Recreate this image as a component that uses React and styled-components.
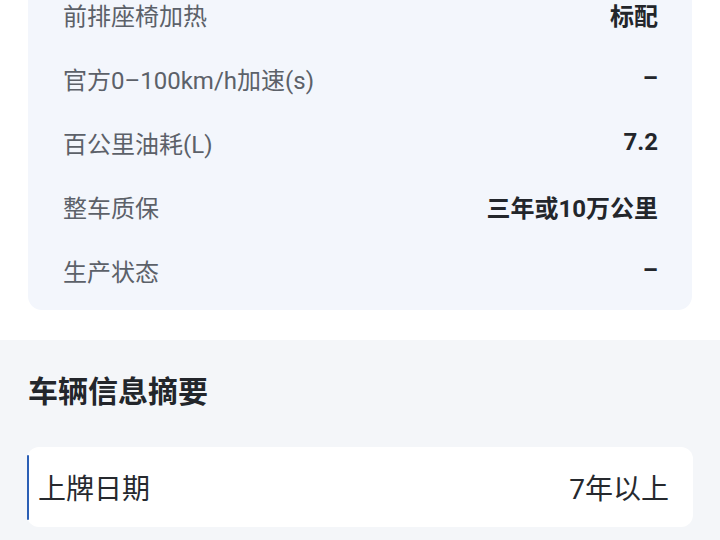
import React from 'react';
import styled, { createGlobalStyle } from 'styled-components';

const GlobalStyle = createGlobalStyle`
  html, body {
    margin: 0;
    padding: 0;
    background: #ffffff;
  }
  body {
    font-family: Roboto, "Noto Sans CJK SC", "Noto Sans", sans-serif;
    -webkit-font-smoothing: antialiased;
  }
`;

const Page = styled.div`
  width: 720px;
  height: 540px;
  overflow: hidden;
  display: flex;
  flex-direction: column;
`;

const TopSection = styled.section`
  background: #ffffff;
  padding: 0 28px 30px;
`;

const SpecCard = styled.div`
  background: #f3f6fc;
  border-radius: 0 0 14px 14px;
  padding: 0 34px 8px 35px;
  margin-top: -18px;
`;

const SpecRow = styled.div`
  height: 64px;
  display: flex;
  align-items: center;
  justify-content: space-between;
  font-size: 24px;
`;

const SpecLabel = styled.span`
  color: #5c6169;
  font-weight: 400;
`;

const SpecValue = styled.span`
  color: #23262b;
  font-weight: 700;
`;

const SummarySection = styled.section`
  flex: 1;
  background: #f4f6f9;
  padding: 31px 27px 0 27px;
`;

const SectionTitle = styled.h2`
  margin: 0 0 34px 1px;
  font-size: 30px;
  line-height: 42px;
  font-weight: 700;
  color: #23262b;
`;

const SummaryCard = styled.div`
  position: relative;
  height: 80px;
  background: #ffffff;
  border-radius: 12px;
  display: flex;
  align-items: center;
  justify-content: space-between;
  padding: 0 24px 0 11px;
  font-size: 28px;
  color: #26292e;

  &::before {
    content: '';
    position: absolute;
    left: 0;
    top: 8px;
    bottom: 7px;
    width: 2px;
    border-radius: 1px;
    background: #2b5fb5;
  }
`;

const specs = [
  { label: '前排座椅加热', value: '标配' },
  { label: '官方0–100km/h加速(s)', value: '–' },
  { label: '百公里油耗(L)', value: '7.2' },
  { label: '整车质保', value: '三年或10万公里' },
  { label: '生产状态', value: '–' },
];

export default function App() {
  return (
    <>
      <GlobalStyle />
      <Page>
        <TopSection>
          <SpecCard>
            {specs.map((s) => (
              <SpecRow key={s.label}>
                <SpecLabel>{s.label}</SpecLabel>
                <SpecValue>{s.value}</SpecValue>
              </SpecRow>
            ))}
          </SpecCard>
        </TopSection>
        <SummarySection>
          <SectionTitle>车辆信息摘要</SectionTitle>
          <SummaryCard>
            <span>上牌日期</span>
            <span>7年以上</span>
          </SummaryCard>
        </SummarySection>
      </Page>
    </>
  );
}
